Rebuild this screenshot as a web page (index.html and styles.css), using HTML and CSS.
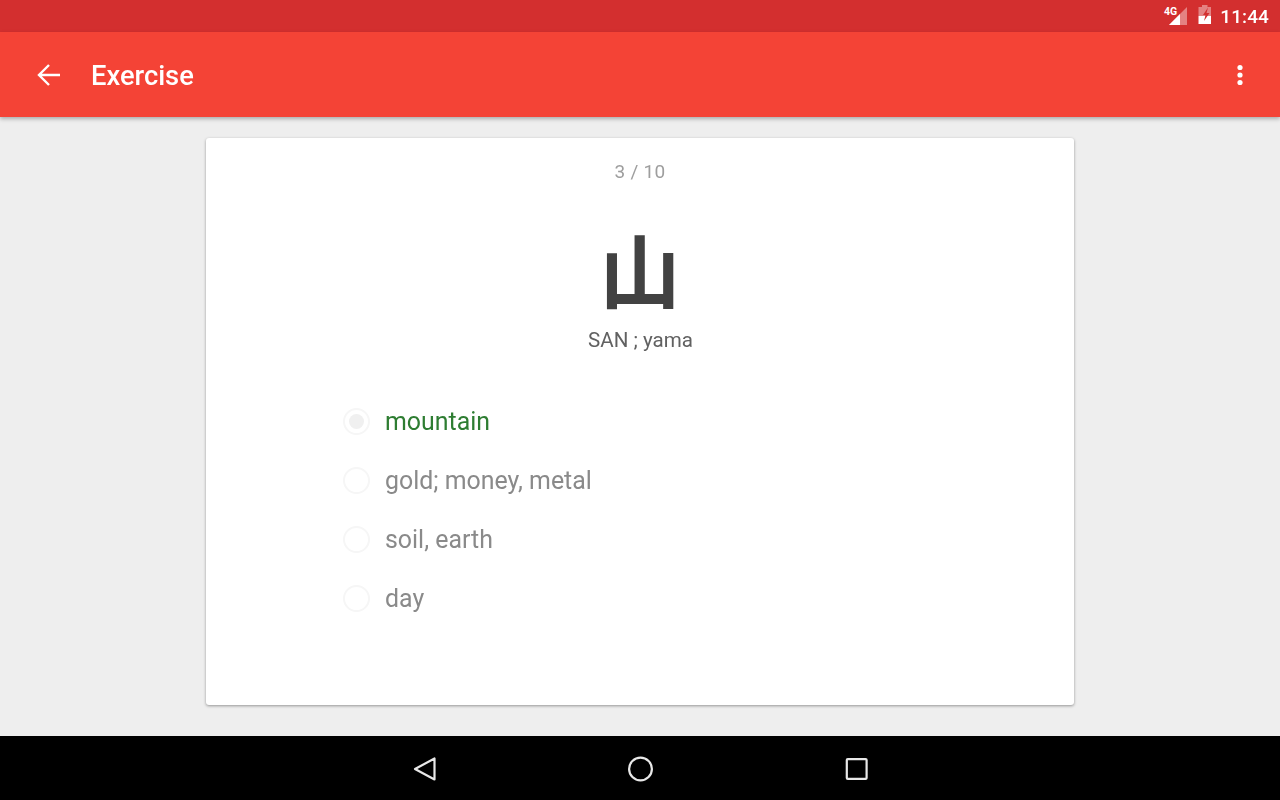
FILE: index.html
```html
<!DOCTYPE html>
<html lang="en">
<head>
<meta charset="utf-8">
<title>Exercise</title>
<link rel="stylesheet" href="styles.css">
</head>
<body>
<div class="screen">
  <div class="status">
    <svg class="net" width="26" height="24" viewBox="0 0 26 24">
      <text x="1" y="11" class="net-label">4G</text>
      <path d="M6 21 L24 3 V21 Z" fill="#fff" opacity=".4"/>
      <path d="M6 21 L17 10 V21 Z" fill="#fff"/>
    </svg>
    <svg class="batt" width="14" height="24" viewBox="0 0 14 24">
      <path d="M0.5 3 H4 V1 H9.5 V3 H13 V12 H0.5 Z" fill="#fff" opacity=".4"/>
      <path d="M0.5 12 H13 V20 H0.5 Z" fill="#fff"/>
      <path d="M10 3.5 L5 11 H7.5 L6 17 L11.5 9 H8.5 Z" fill="#d32f2f"/>
    </svg>
    <span class="clock smooth">11:44</span>
  </div>
  <header class="appbar">
    <svg class="back" width="24" height="24" viewBox="0 0 24 24">
      <path d="M23 12 H2.5 M12 2 L2 12 L12 22" fill="none" stroke="#fff" stroke-width="2.4"/>
    </svg>
    <h1 class="title smooth">Exercise</h1>
    <svg class="more" width="6" height="22" viewBox="0 0 6 22">
      <circle cx="3" cy="3.5" r="2.6" fill="#fff"/>
      <circle cx="3" cy="11" r="2.6" fill="#fff"/>
      <circle cx="3" cy="18.5" r="2.6" fill="#fff"/>
    </svg>
  </header>
  <main class="content">
    <section class="card">
      <div class="progress smooth">3 / 10</div>
      <div class="kanji smooth">山</div>
      <div class="reading smooth">SAN ; yama</div>
      <ul class="options">
        <li class="option correct"><span class="radio checked"></span><span class="smooth">mountain</span></li>
        <li class="option"><span class="radio"></span><span class="smooth">gold; money, metal</span></li>
        <li class="option"><span class="radio"></span><span class="smooth">soil, earth</span></li>
        <li class="option"><span class="radio"></span><span class="smooth">day</span></li>
      </ul>
    </section>
  </main>
  <nav class="navbar">
    <svg width="24" height="26" viewBox="0 0 24 26">
      <path d="M21.5 2.5 V23.5 L2 13 Z" fill="none" stroke="#e8e8e8" stroke-width="2.2" stroke-linejoin="round"/>
    </svg>
    <svg width="26" height="26" viewBox="0 0 26 26">
      <circle cx="13.5" cy="13" r="11.4" fill="none" stroke="#e8e8e8" stroke-width="2.2"/>
    </svg>
    <svg class="recents" width="24" height="24" viewBox="0 0 24 24">
      <rect x="3.8" y="2.1" width="19.8" height="19.8" rx="1" fill="none" stroke="#e8e8e8" stroke-width="2.2"/>
    </svg>
  </nav>
</div>
</body>
</html>
```
FILE: styles.css
```css
* { box-sizing: border-box; }
html, body { margin: 0; padding: 0; }
body { font-family: Roboto, "Noto Sans CJK JP", sans-serif; }
.screen { width: 1280px; height: 800px; display: flex; flex-direction: column; background: #eeeeee; overflow: hidden; }
.smooth { will-change: opacity; }
.status { height: 32px; flex: none; background: #d32f2f; display: flex; align-items: center; justify-content: flex-end; padding-right: 11px; color: #fff; }
.net { margin-right: 9px; }
.net-label { font: 700 10.5px Roboto, sans-serif; fill: #fff; }
.batt { margin-right: 8px; }
.clock { font-size: 19px; font-weight: 500; letter-spacing: .1px; }
.appbar { height: 85px; flex: none; background: #f44336; display: flex; align-items: center; padding: 0 37px; box-shadow: 0 2px 4px rgba(0,0,0,.28); position: relative; z-index: 1; }
.title { margin: 2px 0 0 30px; font-size: 27.3px; font-weight: 500; color: #fff; flex: 1; }
.more { margin-right: 0; }
.content { flex: 1; display: flex; justify-content: center; padding-top: 21px; min-height: 0; }
.card { width: 868px; height: 567px; background: #fff; border-radius: 3px; box-shadow: 0 1px 3px rgba(0,0,0,.38); display: flex; flex-direction: column; align-items: center; padding-top: 22px; }
.progress { font-size: 19px; line-height: 24px; color: #9e9e9e; letter-spacing: .3px; }
.kanji { margin-top: 31px; font-size: 81px; font-weight: 700; line-height: 104px; color: #424242; font-family: "Noto Sans CJK JP", sans-serif; }
.reading { font-size: 20.6px; line-height: 26px; color: #616161; margin: 8px 0 0 1px; }
.options { list-style: none; margin: 39px 0 0; padding: 0 0 0 137px; width: 100%; }
.option { height: 59px; display: flex; align-items: center; font-size: 24.9px; color: #8a8a8a; }
.option.correct { color: #2e7d32; }
.radio { width: 27px; height: 27px; border-radius: 50%; border: 2.5px solid #f6f6f6; margin-right: 15px; flex: none; display: flex; align-items: center; justify-content: center; }
.radio.checked::after { content: ""; width: 15px; height: 15px; border-radius: 50%; background: #f0f0f0; }
.navbar { height: 64px; flex: none; background: #000; display: flex; align-items: center; justify-content: center; gap: 190px; padding-top: 1px; }
.recents { overflow: visible; }
```
